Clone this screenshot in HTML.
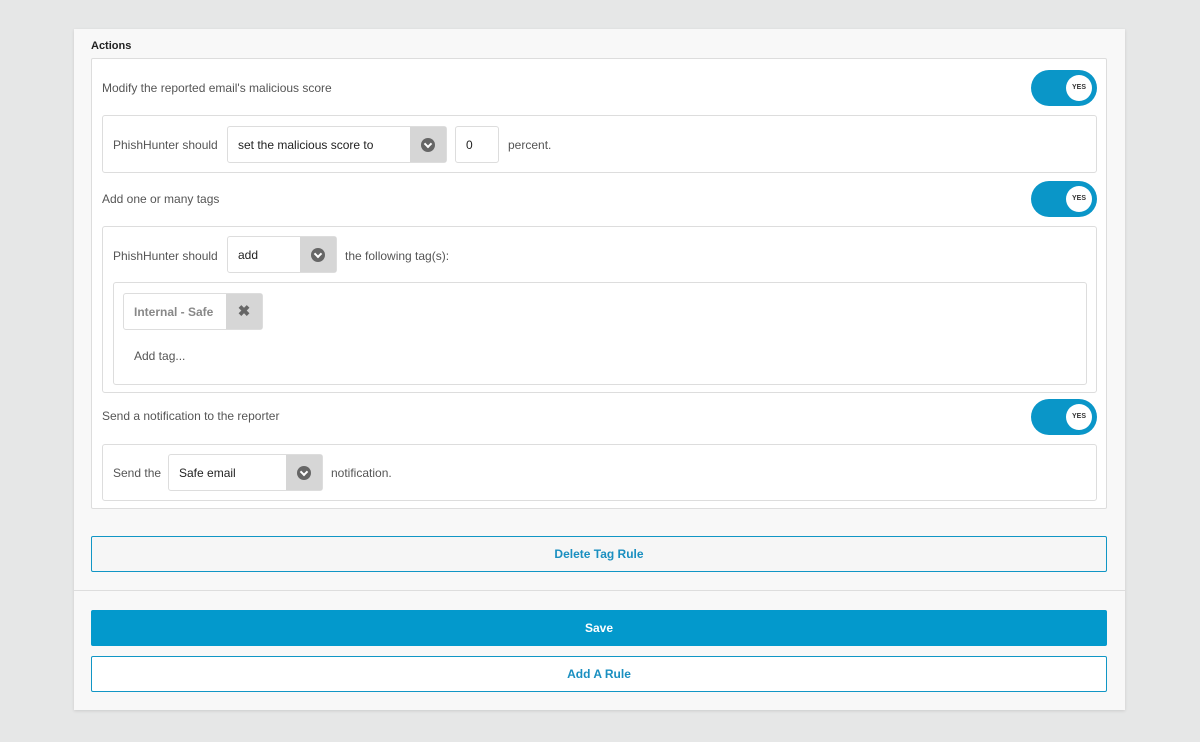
<!DOCTYPE html>
<html><head><style>
*{box-sizing:border-box;margin:0;padding:0}
body{width:1200px;height:742px;background:#e6e7e7;font-family:"Liberation Sans",sans-serif;font-size:12px;color:#555;position:relative;overflow:hidden}
.card{position:absolute;left:74px;top:29px;width:1051px;height:681px;background:#f8f8f8;box-shadow:0 1px 3px rgba(0,0,0,.12)}
.abs{position:absolute}
.title{left:17px;top:11px;font-weight:bold;font-size:11px;color:#222}
.outer{left:17px;top:29px;width:1016px;height:451px;border:1px solid #ddd;background:#fff;border-radius:2px}
.lbl{position:absolute;left:10px;font-size:12px;color:#555}
.tog{position:absolute;left:939px;width:66px;height:36px;border-radius:18px;background:#0a96c8}
.tog i{position:absolute;right:5px;top:5px;width:26px;height:26px;border-radius:50%;background:#fff;font-style:normal;font-size:7px;font-weight:bold;color:#333;text-align:center;line-height:26px}
.sub{position:absolute;left:10px;width:995px;border:1px solid #ddd;border-radius:3px;background:#fff}
.sel{position:absolute;height:37px;border:1px solid #ddd;border-radius:3px;background:#fff;color:#222;line-height:37px;padding-left:10px}
.sel b{position:absolute;right:0;top:0;width:36px;height:35px;background:#d6d6d6}
.sel b:after{content:"";position:absolute;left:11px;top:11px;width:14px;height:14px;border-radius:50%;background:#666}
.sel b:before{content:"";position:absolute;left:15px;top:14px;width:4px;height:4px;border-right:2px solid #fff;border-bottom:2px solid #fff;transform:rotate(45deg);z-index:1}
.t{position:absolute;color:#555}
.btn{position:absolute;left:17px;width:1016px;height:36px;border:1px solid #1196c5;border-radius:2px;text-align:center;line-height:34px;font-weight:bold;color:#1a8fc0;font-size:12px}
</style></head><body>
<div class="card">
<div class="abs title">Actions</div>
<div class="abs outer">
 <div class="lbl" style="top:22px">Modify the reported email's malicious score</div>
 <div class="tog" style="top:11px"><i>YES</i></div>
 <div class="sub" style="top:56px;height:58px">
  <div class="t" style="left:10px;top:22px">PhishHunter should</div>
  <div class="sel" style="left:124px;top:10px;width:220px">set the malicious score to<b></b></div>
  <div class="sel" style="left:352px;top:10px;width:44px">0</div>
  <div class="t" style="left:405px;top:22px">percent.</div>
 </div>
 <div class="lbl" style="top:133px">Add one or many tags</div>
 <div class="tog" style="top:122px"><i>YES</i></div>
 <div class="sub" style="top:167px;height:167px">
  <div class="t" style="left:10px;top:22px">PhishHunter should</div>
  <div class="sel" style="left:124px;top:9px;width:110px">add<b></b></div>
  <div class="t" style="left:242px;top:22px">the following tag(s):</div>
  <div class="abs" style="left:10px;top:55px;width:974px;height:103px;border:1px solid #ddd;border-radius:3px">
   <div class="abs" style="left:9px;top:10px;width:140px;height:37px;border:1px solid #ddd;border-radius:3px;background:#fff">
    <span class="t" style="left:10px;top:11px;font-weight:bold;color:#888">Internal - Safe</span>
    <span class="abs" style="right:0;top:0;width:36px;height:35px;background:#d6d6d6;text-align:center;line-height:35px;font-weight:bold;color:#666;font-size:15px">✖</span>
   </div>
   <div class="t" style="left:20px;top:66px">Add tag...</div>
  </div>
 </div>
 <div class="lbl" style="top:350px">Send a notification to the reporter</div>
 <div class="tog" style="top:340px"><i>YES</i></div>
 <div class="sub" style="top:385px;height:57px">
  <div class="t" style="left:10px;top:21px">Send the</div>
  <div class="sel" style="left:65px;top:9px;width:155px">Safe email<b></b></div>
  <div class="t" style="left:228px;top:21px">notification.</div>
 </div>
</div>
<div class="btn" style="top:507px;background:#f6f6f6">Delete Tag Rule</div>
<div class="abs" style="left:0;top:561px;width:1051px;height:1px;background:#ddd"></div>
<div class="btn" style="top:581px;height:36px;background:#0399cc;color:#fff;border-color:#0399cc">Save</div>
<div class="btn" style="top:627px;background:#fff">Add A Rule</div>
</div>
</body></html>
